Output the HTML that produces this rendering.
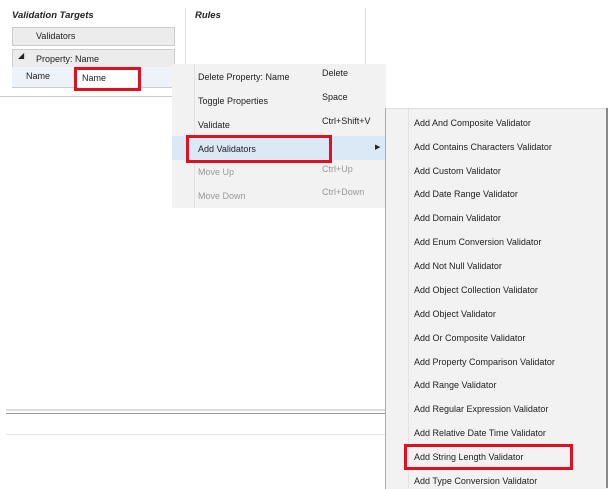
<!DOCTYPE html>
<html><head><style>
body{margin:0;width:608px;height:488px;background:#fff;position:relative;overflow:hidden;font-family:"Liberation Sans",sans-serif;font-size:9px;color:#222}
.a{position:absolute}
.t{position:absolute;white-space:nowrap}
</style></head><body>
<div class="t" style="left:12px;top:10px;font-weight:bold;font-style:italic;font-size:9.5px">Validation Targets</div>
<div class="t" style="left:195px;top:10px;font-weight:bold;font-style:italic;font-size:9.5px">Rules</div>
<div class="a" style="left:185px;top:8px;width:1px;height:58px;background:#ddd"></div>
<div class="a" style="left:365px;top:8px;width:1px;height:58px;background:#ddd"></div>
<div class="a" style="left:12px;top:27px;width:161px;height:17px;background:#ececec;border:1px solid #ccc"></div>
<div class="t" style="left:36px;top:31px">Validators</div>
<div class="a" style="left:12px;top:49px;width:161px;height:17px;background:#ececec;border:1px solid #ccc"></div>
<div class="t" style="left:18px;top:51px;font-size:8px">◢</div>
<div class="t" style="left:36px;top:54px">Property: Name</div>
<div class="a" style="left:12px;top:67px;width:162px;height:20px;background:#eef3f9;border-bottom:1px solid #ccc"></div>
<div class="t" style="left:26px;top:71px">Name</div>
<div class="a" style="left:74px;top:67px;width:61px;height:18px;background:#fff;border:3px solid #e01020"></div>
<div class="t" style="left:82px;top:73px">Name</div>
<div class="a" style="left:0;top:96px;width:172px;height:1px;background:#ccc"></div>
<div class="a" style="left:6px;top:409px;width:380px;height:2px;background:#ddd"></div>
<div class="a" style="left:6px;top:413px;width:380px;height:1px;background:#999"></div>
<div class="a" style="left:6px;top:434px;width:380px;height:1px;background:#e8e8e8"></div>

<div class="a" style="left:172px;top:64px;width:214px;height:144px;background:#f2f2f2"></div>
<div class="a" style="left:194px;top:64px;width:1px;height:144px;background:#e2e2e2"></div>
<div class="a" style="left:172px;top:136px;width:214px;height:24px;background:#dbe8f5"></div>
<div class="t" style="left:198px;top:72px">Delete Property: Name</div><div class="t" style="left:322px;top:68px">Delete</div>
<div class="t" style="left:198px;top:96px">Toggle Properties</div><div class="t" style="left:322px;top:92px">Space</div>
<div class="t" style="left:198px;top:120px">Validate</div><div class="t" style="left:322px;top:116px">Ctrl+Shift+V</div>
<div class="t" style="left:198px;top:144px">Add Validators</div><div class="t" style="left:375px;top:143px;font-size:7px">▶</div>
<div class="a" style="left:186px;top:135px;width:140px;height:22px;border:3px solid #e01020"></div>
<div class="t" style="left:198px;top:167px;color:#999">Move Up</div><div class="t" style="left:322px;top:164px;color:#999">Ctrl+Up</div>
<div class="t" style="left:198px;top:191px;color:#999">Move Down</div><div class="t" style="left:322px;top:187px;color:#999">Ctrl+Down</div>

<div class="a" style="left:385px;top:108px;width:223px;height:380px;background:#f2f2f2;border-left:1px solid #aaa;border-top:1px solid #ddd"></div>
<div class="a" style="left:408px;top:109px;width:1px;height:379px;background:#e2e2e2"></div>
<div class="a" style="left:606px;top:108px;width:2px;height:380px;background:#888"></div>
<div class="t" style="left:414px;top:118px">Add And Composite Validator</div>
<div class="t" style="left:414px;top:142px">Add Contains Characters Validator</div>
<div class="t" style="left:414px;top:166px">Add Custom Validator</div>
<div class="t" style="left:414px;top:189px">Add Date Range Validator</div>
<div class="t" style="left:414px;top:213px">Add Domain Validator</div>
<div class="t" style="left:414px;top:237px">Add Enum Conversion Validator</div>
<div class="t" style="left:414px;top:261px">Add Not Null Validator</div>
<div class="t" style="left:414px;top:285px">Add Object Collection Validator</div>
<div class="t" style="left:414px;top:309px">Add Object Validator</div>
<div class="t" style="left:414px;top:333px">Add Or Composite Validator</div>
<div class="t" style="left:414px;top:357px">Add Property Comparison Validator</div>
<div class="t" style="left:414px;top:380px">Add Range Validator</div>
<div class="t" style="left:414px;top:404px">Add Regular Expression Validator</div>
<div class="t" style="left:414px;top:428px">Add Relative Date Time Validator</div>
<div class="t" style="left:414px;top:452px">Add String Length Validator</div>
<div class="t" style="left:414px;top:476px">Add Type Conversion Validator</div>
<div class="a" style="left:404px;top:444px;width:163px;height:20px;border:3px solid #e01020"></div>
</body></html>
